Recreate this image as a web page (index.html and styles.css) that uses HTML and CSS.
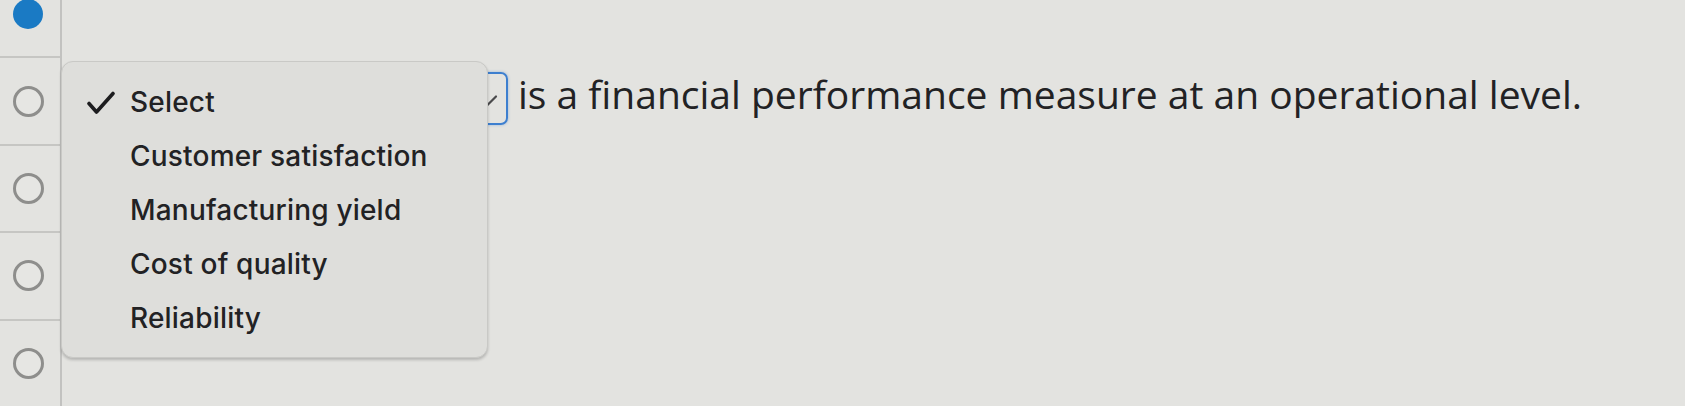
FILE: index.html
```html
<!DOCTYPE html>
<html lang="en">
<head>
<meta charset="utf-8">
<title>Question</title>
<link rel="stylesheet" href="styles.css">
</head>
<body>
<div class="page">
  <div class="radios">
    <div class="radio-row"><span class="radio radio-on"></span></div>
    <div class="radio-row"><span class="radio"></span></div>
    <div class="radio-row"><span class="radio"></span></div>
    <div class="radio-row"><span class="radio"></span></div>
    <div class="radio-row last"><span class="radio"></span></div>
  </div>
  <div class="content">
    <div class="question">
      <div class="select-box">
        <svg class="chev" width="22" height="14" viewBox="0 0 22 14"><path d="M2 2.5 L11 11.5 L20 2.5" fill="none" stroke="#4a4a4c" stroke-width="2.2" stroke-linecap="round" stroke-linejoin="round"/></svg>
      </div>
      <p class="qtext">is a financial performance measure at an operational level.</p>
    </div>
    <ul class="menu">
      <li class="item checked"><svg class="check" width="30" height="24" viewBox="0 0 30 24"><path d="M3 12.5 L10.5 21 L27 2.5" fill="none" stroke="#1d1d1f" stroke-width="3.6" stroke-linecap="round" stroke-linejoin="round"/></svg>Select</li>
      <li class="item">Customer satisfaction</li>
      <li class="item">Manufacturing yield</li>
      <li class="item">Cost of quality</li>
      <li class="item">Reliability</li>
    </ul>
  </div>
</div>
</body>
</html>
```
FILE: styles.css
```css
html, body {
  margin: 0;
  padding: 0;
  height: 100%;
  overflow: hidden;
}
body {
  background: #e3e3e0;
  color: #262628;
}
.page {
  display: flex;
  height: 406px;
}
.radios {
  width: 60px;
  flex: none;
  margin-top: -29px;
  border-right: 2px solid #c2c2c0;
  display: flex;
  flex-direction: column;
}
.radio-row {
  height: 86px;
  border-bottom: 2px solid #c6c6c3;
  display: flex;
  align-items: center;
  padding-left: 13px;
}
.radio-row.last {
  border-bottom: none;
}
.radio {
  width: 25px;
  height: 25px;
  border-radius: 50%;
  border: 3px solid #8e8e8c;
  box-sizing: content-box;
  background: #e6e6e3;
}
.radio-on {
  width: 30px;
  height: 30px;
  border: none;
  background: #1a7ac4;
}
.content {
  position: relative;
  flex: 1;
}
.question {
  display: flex;
  align-items: flex-start;
  padding-top: 72px;
}
.select-box {
  width: 435px;
  height: 53px;
  box-sizing: border-box;
  margin-left: 11px;
  border: 2px solid #3d7fcf;
  border-radius: 7px;
  box-shadow: 0 0 3px rgba(61, 127, 207, 0.45);
  display: flex;
  align-items: center;
  justify-content: flex-end;
  padding-right: 8px;
  padding-top: 4px;
}
.qtext {
  margin: -3px 0 0 10px;
  font-family: "Open Sans", "Liberation Sans", sans-serif;
  font-size: 39px;
  line-height: 1.3;
  color: #222224;
}
.menu {
  position: absolute;
  left: -1px;
  top: 61px;
  width: 427px;
  height: 297px;
  box-sizing: border-box;
  margin: 0;
  padding: 13px 0 0 0;
  list-style: none;
  background: #dededb;
  border: 1px solid #c9c9c6;
  border-radius: 12px;
  box-shadow: 0 2px 3px rgba(0, 0, 0, 0.2);
  font-family: Inter, "Noto Sans", sans-serif;
  font-size: 28px;
  font-weight: 500;
  letter-spacing: 0.2px;
  color: #222224;
}
.item {
  height: 54px;
  display: flex;
  align-items: center;
  padding-left: 68px;
  position: relative;
}
.check {
  position: absolute;
  left: 24px;
  top: 16px;
}
```
